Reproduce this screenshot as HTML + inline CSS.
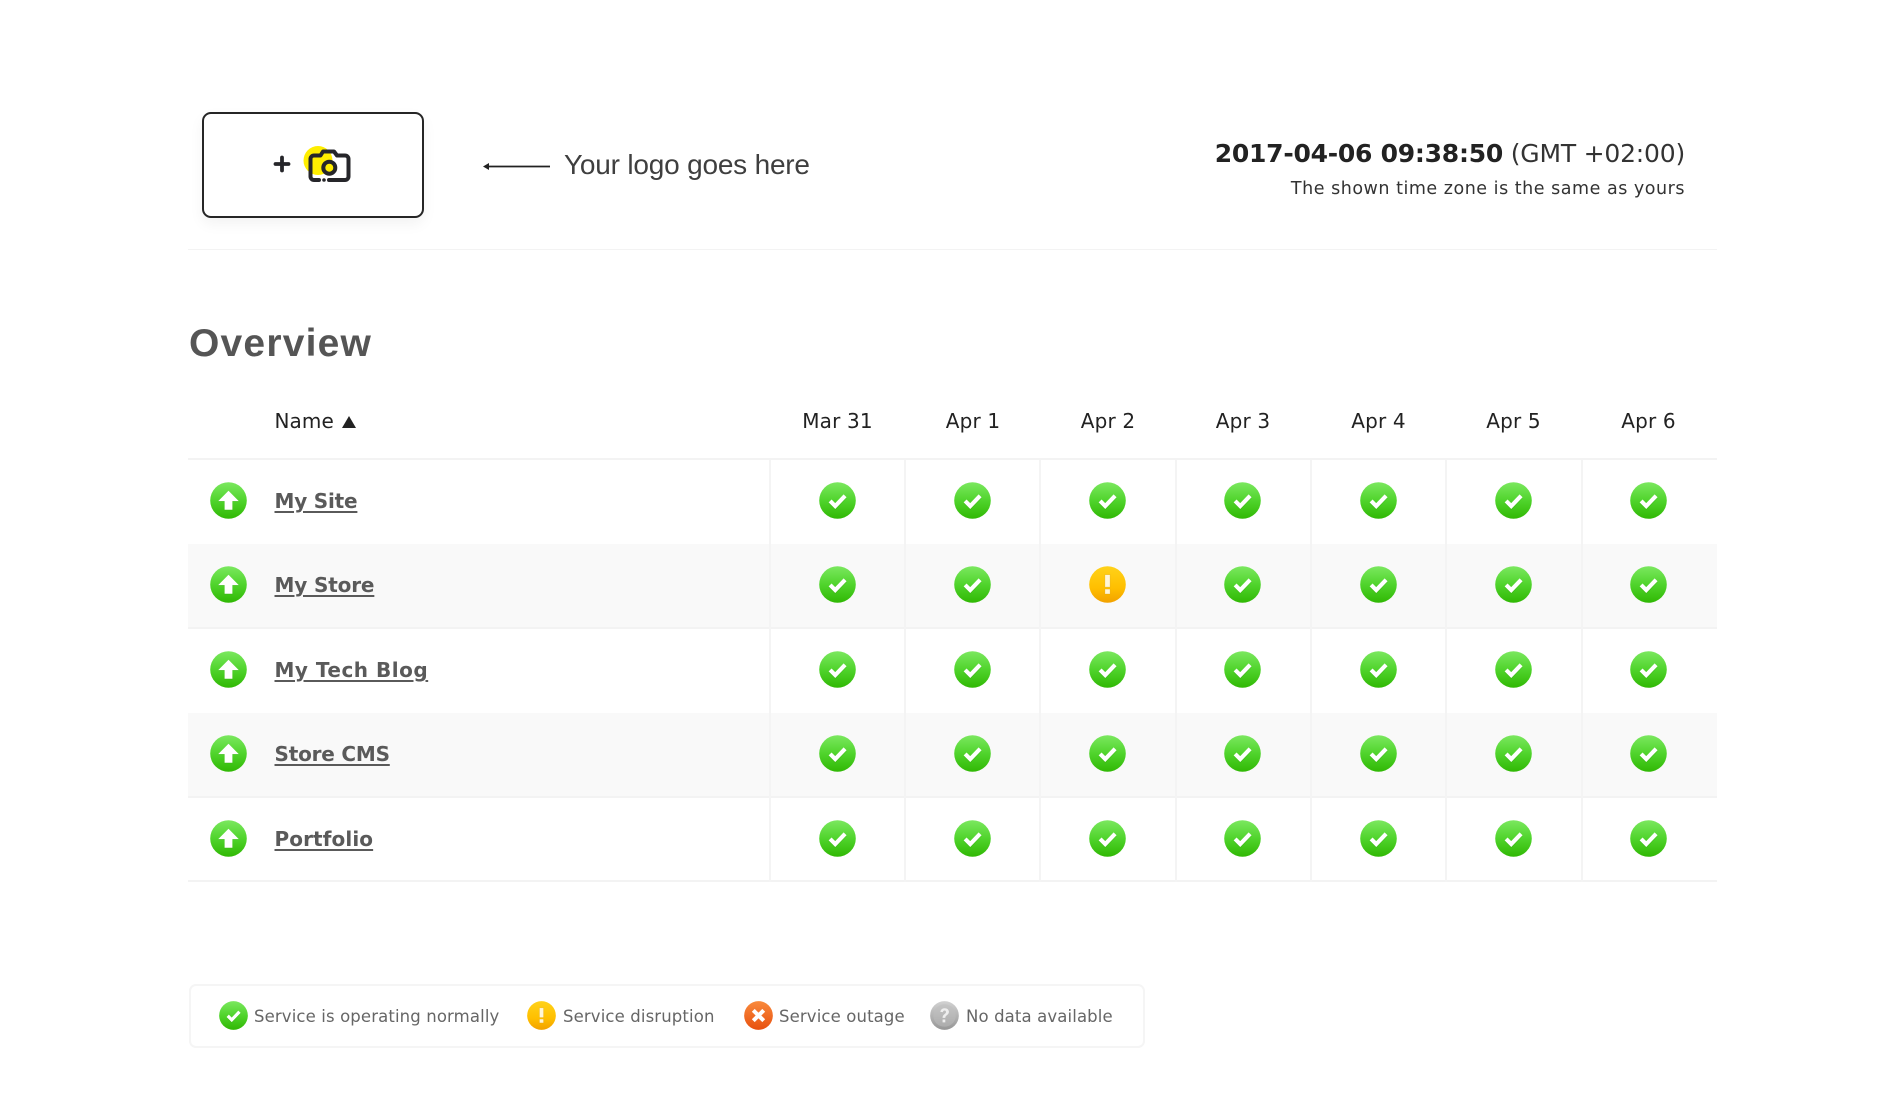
<!DOCTYPE html>
<html><head><meta charset="utf-8"><style>
html,body{margin:0;padding:0;background:#fff}
body{width:1902px;height:1120px;position:relative;overflow:hidden;font-family:"DejaVu Sans","Liberation Sans",sans-serif}
.a{position:absolute;white-space:nowrap}
.r{position:absolute;left:188px;width:1529px;height:84px;border-bottom:2px solid #f3f3f3;box-sizing:content-box}
.z{background:#f9f9f9}
.v{position:absolute;top:460px;width:2px;height:422px;background:#f4f4f4}
.h{top:408px;font-size:20px;line-height:26px;color:#222;width:135px;text-align:center;letter-spacing:.15px}
.n{left:274.500px;font-size:20px;line-height:26px;font-weight:bold;color:#5a5a5a;text-decoration:underline;text-underline-offset:3px;letter-spacing:-.2px}
.i{position:absolute;width:37px;height:37px}
.l{top:1004.500px;font-size:16.500px;line-height:24px;color:#666;letter-spacing:.13px}
.g{position:absolute;width:29px;height:29px;top:1001px}
</style></head><body>
<svg width="0" height="0" style="position:absolute"><defs>
<linearGradient id="gg" x1="0" y1="0" x2="0" y2="1"><stop offset="0" stop-color="#7be85f"/><stop offset=".5" stop-color="#50d42c"/><stop offset="1" stop-color="#30b804"/></linearGradient>
<linearGradient id="gy" x1="0" y1="0" x2="0" y2="1"><stop offset="0" stop-color="#ffd21a"/><stop offset=".6" stop-color="#ffbf00"/><stop offset="1" stop-color="#f2a100"/></linearGradient>
<linearGradient id="gr" x1="0" y1="0" x2="0" y2="1"><stop offset="0" stop-color="#f98a3c"/><stop offset="1" stop-color="#e8500f"/></linearGradient>
<linearGradient id="ga" x1="0" y1="0" x2="0" y2="1"><stop offset="0" stop-color="#d2d2d2"/><stop offset="1" stop-color="#969696"/></linearGradient>
<symbol id="c" viewBox="0 0 36 36"><circle cx="18" cy="18" r="17.800" fill="url(#gg)"/><path d="M10.800 19l5 5 9.600-10" fill="none" stroke="#2e9e10" stroke-opacity=".3" stroke-width="4.600"/><path d="M10.800 18.400l5 5 9.600-10" fill="none" stroke="#fff" stroke-width="4"/></symbol>
<symbol id="u" viewBox="0 0 36 36"><circle cx="18" cy="18" r="17.800" fill="url(#gg)"/><path d="M18 9.200l10.200 10.200H22V27.600h-8V19.400H7.800z" fill="#2e9e10" fill-opacity=".3"/><path d="M18 8.500l10 10.100H21.800V27h-7.600V18.600H8z" fill="#fff"/></symbol>
<symbol id="y" viewBox="0 0 36 36"><circle cx="18" cy="18" r="17.800" fill="url(#gy)"/><path d="M15.500 8.500h5v12h-5zM15.500 22.500h5v4.700h-5z" fill="#fff6d8" stroke="#c98a00" stroke-opacity=".35" stroke-width=".6"/></symbol>
<symbol id="x" viewBox="0 0 36 36"><circle cx="18" cy="18" r="17.800" fill="url(#gr)"/><path d="M11.500 11.500l13 13M24.500 11.500l-13 13" stroke="#fff" stroke-width="5" fill="none"/></symbol>
<symbol id="q" viewBox="0 0 36 36"><circle cx="18" cy="18" r="17.800" fill="url(#ga)"/><circle cx="18" cy="18" r="14" fill="#bdbdbd" opacity=".5"/><path d="M12.800 13.500c.5-3 2.700-4.500 5.400-4.500 3.200 0 5.300 2 5.300 4.500 0 3.900-4.500 3.900-4.500 7.500h-3.400c0-5 4.300-4.800 4.300-7.400 0-1-.7-1.800-1.800-1.800-1.200 0-1.900.8-2.100 2zM15.600 23h3.400v3.600h-3.400z" fill="#eee"/></symbol>
</defs></svg>

<!-- logo -->
<div class="a" style="left:202px;top:112px;width:222px;height:106px;box-sizing:border-box;border:2px solid #262626;border-radius:9px;background:#fff;box-shadow:0 6px 14px rgba(0,0,0,.05)"></div>
<svg class="a" style="left:0;top:0" width="900" height="260" viewBox="0 0 900 260">
<circle cx="318" cy="160.500" r="14.500" fill="#ffee00"/>
<path d="M319 180H314a3.500 3.500 0 0 1-3.500-3.500V159a3.500 3.500 0 0 1 3.500-3.500h6.500l2.500-4h11l3 4h8a3.500 3.500 0 0 1 3.500 3.500v17.500a3.500 3.500 0 0 1-3.500 3.500H329" fill="none" stroke="#26262a" stroke-width="4" stroke-linejoin="round" stroke-linecap="round"/>
<circle cx="324" cy="180" r="1.800" fill="#26262a"/>
<circle cx="329.300" cy="167.700" r="6" fill="#ffee00" stroke="#26262a" stroke-width="4"/>
<path d="M282 157.500v13M275.500 164h13" stroke="#26262a" stroke-width="3.800" stroke-linecap="round"/>
<path d="M487 166.500h63" stroke="#222" stroke-width="1.800"/><path d="M483 166.500l6-3.500v7z" fill="#222"/>
</svg>
<div class="a" style="left:564px;top:147px;font:28px/36px 'Liberation Sans',sans-serif;color:#3f3f3f;letter-spacing:-.2px">Your logo goes here</div>
<div class="a" style="right:217px;top:138px;font-size:25px;line-height:32px;color:#333;letter-spacing:-.2px"><b style="color:#222;letter-spacing:-.25px">2017-04-06 09:38:50</b> (GMT +02:00)</div>
<div class="a" style="right:217px;top:177px;font-size:17.500px;line-height:24px;color:#333;letter-spacing:.52px">The shown time zone is the same as yours</div>
<div class="a" style="left:188px;top:249px;width:1529px;height:1px;background:#f3f3f3"></div>

<div class="a" style="left:189px;top:321px;font:bold 39px/46px 'Liberation Sans',sans-serif;color:#555;letter-spacing:1.200px">Overview</div>

<div class="a" style="left:274.500px;top:408px;font-size:20px;line-height:26px;color:#222;letter-spacing:.1px">Name <svg width="14" height="12" viewBox="0 0 14 12" style="margin-left:2px"><path d="M7 0l7 12H0z" fill="#222"/></svg></div>
<div class="a h" style="left:770px">Mar 31</div>
<div class="a h" style="left:905.500px">Apr 1</div>
<div class="a h" style="left:1040.500px">Apr 2</div>
<div class="a h" style="left:1175.500px">Apr 3</div>
<div class="a h" style="left:1311px">Apr 4</div>
<div class="a h" style="left:1446px">Apr 5</div>
<div class="a h" style="left:1581px">Apr 6</div>

<div class="a" style="left:188px;top:458px;width:1529px;height:2px;background:#f3f3f3"></div>
<div class="r" style="top:460px"></div>
<div class="r z" style="top:544px;height:83px"></div>
<div class="r" style="top:629px"></div>
<div class="r z" style="top:713px;height:83px"></div>
<div class="r" style="top:798px;height:82px"></div>

<div class="v" style="left:769px"></div><div class="v" style="left:904px"></div><div class="v" style="left:1039px"></div><div class="v" style="left:1175px"></div><div class="v" style="left:1310px"></div><div class="v" style="left:1445px"></div><div class="v" style="left:1581px"></div>

<div class="a n" style="top:488px">My Site</div>
<div class="a n" style="top:572px;letter-spacing:-.15px">My Store</div>
<div class="a n" style="top:657px;letter-spacing:.5px">My Tech Blog</div>
<div class="a n" style="top:741px">Store CMS</div>
<div class="a n" style="top:826px;letter-spacing:.1px">Portfolio</div>

<svg class="i" style="left:210px;top:482px"><use href="#u"/></svg>
<svg class="i" style="left:210px;top:566px"><use href="#u"/></svg>
<svg class="i" style="left:210px;top:651px"><use href="#u"/></svg>
<svg class="i" style="left:210px;top:735px"><use href="#u"/></svg>
<svg class="i" style="left:210px;top:820px"><use href="#u"/></svg>

<svg class="i" style="left:819px;top:482px"><use href="#c"/></svg><svg class="i" style="left:954px;top:482px"><use href="#c"/></svg><svg class="i" style="left:1089px;top:482px"><use href="#c"/></svg><svg class="i" style="left:1224px;top:482px"><use href="#c"/></svg><svg class="i" style="left:1360px;top:482px"><use href="#c"/></svg><svg class="i" style="left:1495px;top:482px"><use href="#c"/></svg><svg class="i" style="left:1630px;top:482px"><use href="#c"/></svg>
<svg class="i" style="left:819px;top:566px"><use href="#c"/></svg><svg class="i" style="left:954px;top:566px"><use href="#c"/></svg><svg class="i" style="left:1089px;top:566px"><use href="#y"/></svg><svg class="i" style="left:1224px;top:566px"><use href="#c"/></svg><svg class="i" style="left:1360px;top:566px"><use href="#c"/></svg><svg class="i" style="left:1495px;top:566px"><use href="#c"/></svg><svg class="i" style="left:1630px;top:566px"><use href="#c"/></svg>
<svg class="i" style="left:819px;top:651px"><use href="#c"/></svg><svg class="i" style="left:954px;top:651px"><use href="#c"/></svg><svg class="i" style="left:1089px;top:651px"><use href="#c"/></svg><svg class="i" style="left:1224px;top:651px"><use href="#c"/></svg><svg class="i" style="left:1360px;top:651px"><use href="#c"/></svg><svg class="i" style="left:1495px;top:651px"><use href="#c"/></svg><svg class="i" style="left:1630px;top:651px"><use href="#c"/></svg>
<svg class="i" style="left:819px;top:735px"><use href="#c"/></svg><svg class="i" style="left:954px;top:735px"><use href="#c"/></svg><svg class="i" style="left:1089px;top:735px"><use href="#c"/></svg><svg class="i" style="left:1224px;top:735px"><use href="#c"/></svg><svg class="i" style="left:1360px;top:735px"><use href="#c"/></svg><svg class="i" style="left:1495px;top:735px"><use href="#c"/></svg><svg class="i" style="left:1630px;top:735px"><use href="#c"/></svg>
<svg class="i" style="left:819px;top:820px"><use href="#c"/></svg><svg class="i" style="left:954px;top:820px"><use href="#c"/></svg><svg class="i" style="left:1089px;top:820px"><use href="#c"/></svg><svg class="i" style="left:1224px;top:820px"><use href="#c"/></svg><svg class="i" style="left:1360px;top:820px"><use href="#c"/></svg><svg class="i" style="left:1495px;top:820px"><use href="#c"/></svg><svg class="i" style="left:1630px;top:820px"><use href="#c"/></svg>

<!-- legend -->
<div class="a" style="left:189px;top:984px;width:956px;height:64px;box-sizing:border-box;border:2px solid #f5f5f5;border-radius:7px"></div>
<svg class="g" style="left:219px"><use href="#c"/></svg>
<div class="a l" style="left:254px">Service is operating normally</div>
<svg class="g" style="left:527px"><use href="#y"/></svg>
<div class="a l" style="left:563px">Service disruption</div>
<svg class="g" style="left:744px"><use href="#x"/></svg>
<div class="a l" style="left:779px">Service outage</div>
<svg class="g" style="left:930px"><use href="#q"/></svg>
<div class="a l" style="left:966px">No data available</div>
</body></html>
